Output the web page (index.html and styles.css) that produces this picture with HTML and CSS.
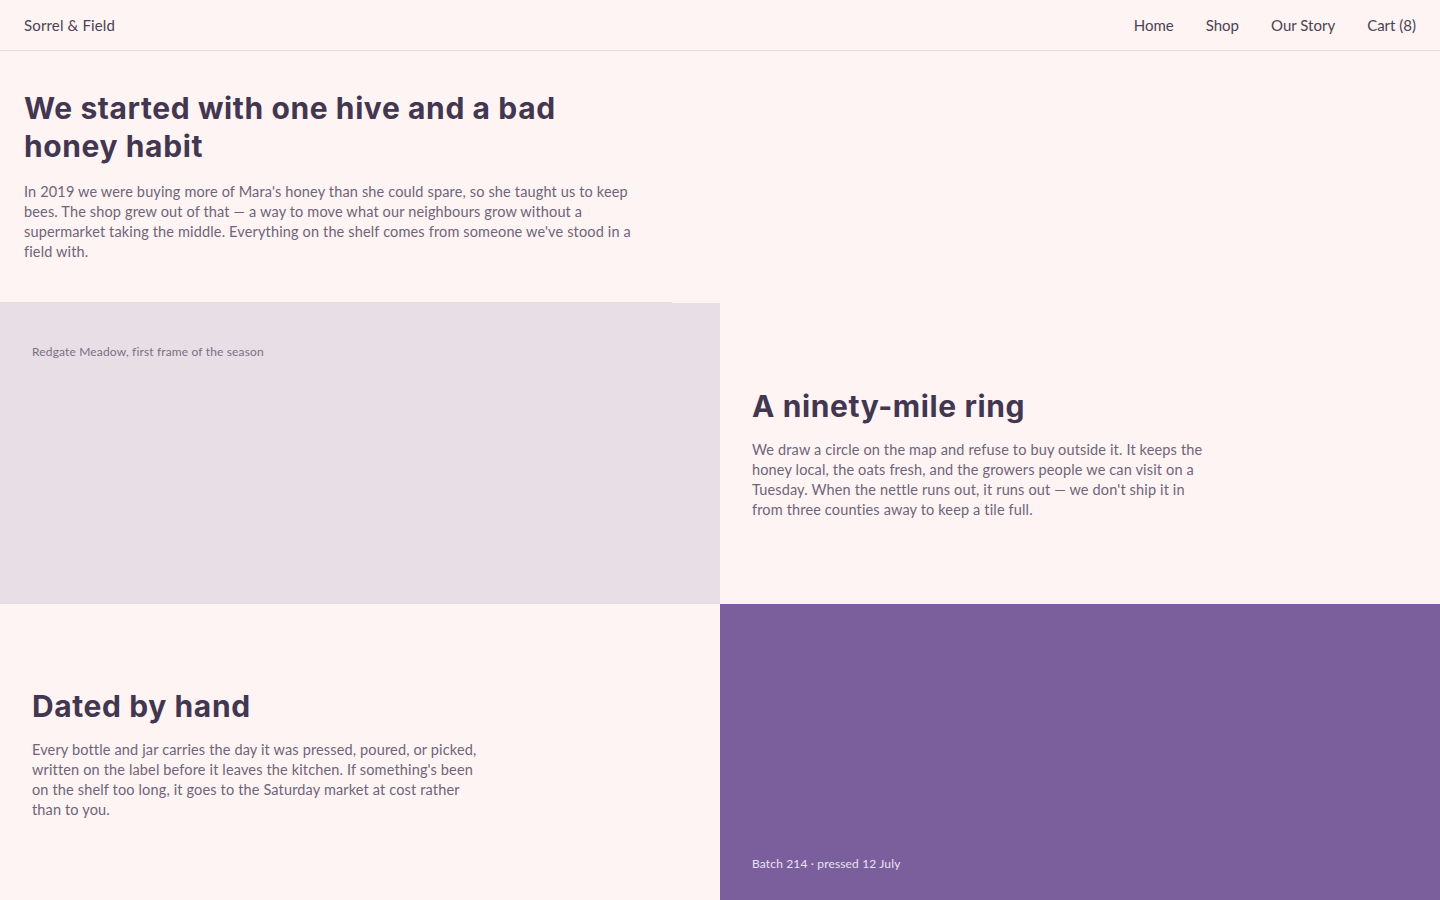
FILE: index.html
```html
<!DOCTYPE html>
<html lang="en">
<head>
    <meta charset="UTF-8">
    <meta name="viewport" content="width=device-width, initial-scale=1.0">
    <title>Our Story · Sorrel &amp; Field</title>
<link rel="stylesheet" href="styles.css">
</head>
<body>
    <header class="site-header">
        <a class="brand" href="#">Sorrel &amp; Field</a>
        <nav class="main-nav">
            <a href="#">Home</a>
            <a href="#">Shop</a>
            <a href="#">Our Story</a>
            <a href="#">Cart (8)</a>
        </nav>
    </header>

    <section class="intro">
        <h1>We started with one hive and a bad honey habit</h1>
        <p>In 2019 we were buying more of Mara's honey than she could spare, so she taught us to keep bees. The shop grew out of that — a way to move what our neighbours grow without a supermarket taking the middle. Everything on the shelf comes from someone we've stood in a field with.</p>
    </section>

    <section class="story-grid">
        <div class="tile tile-photo">
            <span class="caption">Redgate Meadow, first frame of the season</span>
        </div>
        <div class="tile tile-text">
            <h2>A ninety-mile ring</h2>
            <p>We draw a circle on the map and refuse to buy outside it. It keeps the honey local, the oats fresh, and the growers people we can visit on a Tuesday. When the nettle runs out, it runs out — we don't ship it in from three counties away to keep a tile full.</p>
        </div>
        <div class="tile tile-text">
            <h2>Dated by hand</h2>
            <p>Every bottle and jar carries the day it was pressed, poured, or picked, written on the label before it leaves the kitchen. If something's been on the shelf too long, it goes to the Saturday market at cost rather than to you.</p>
        </div>
        <div class="tile tile-batch">
            <span class="caption">Batch 214 · pressed 12 July</span>
        </div>
    </section>
</body>
</html>
```

FILE: styles.css
```css
:root {
    --bg: #fdf4f3;
    --ink: #433650;
    --muted: #6f6479;
    --line: #e6dcdc;
    --lilac: #e8dee6;
    --plum: #7a5f9c;
}

* {
    box-sizing: border-box;
}

body {
    margin: 0;
    background: var(--bg);
    color: var(--muted);
    font-family: Lato, "Open Sans", sans-serif;
    font-size: 14.5px;
    line-height: 20px;
    letter-spacing: 0.15px;
}

a {
    color: inherit;
    text-decoration: none;
}

.site-header {
    height: 51px;
    padding: 0 24px;
    display: flex;
    align-items: center;
    justify-content: space-between;
    border-bottom: 1px solid var(--line);
    color: #4b4354;
    font-size: 15px;
}

.main-nav {
    display: flex;
    gap: 32px;
    letter-spacing: 0;
}

h1,
h2 {
    margin: 0;
    color: var(--ink);
    font-family: Inter, sans-serif;
    font-weight: 700;
    letter-spacing: 0.02em;
}

.intro {
    max-width: 672px;
    padding: 38px 24px 40px;
    border-bottom: 1px solid var(--line);
}

.intro h1 {
    font-size: 30px;
    line-height: 38px;
    margin-bottom: 17px;
}

.intro p {
    margin: 0;
}

.story-grid {
    display: grid;
    grid-template-columns: 1fr 1fr;
    grid-template-rows: 301px 300px;
}

.tile {
    padding: 32px;
}

.tile-photo {
    background: var(--lilac);
    border-bottom: 1px solid var(--line);
    padding-top: 38px;
}

.tile-text {
    display: flex;
    flex-direction: column;
    justify-content: center;
}

.tile-text h2 {
    font-size: 30px;
    line-height: 36px;
    margin-bottom: 16px;
}

.tile-text p {
    margin: 0;
    max-width: 460px;
}

.tile-batch {
    background: var(--plum);
    display: flex;
    align-items: flex-end;
}

.caption {
    font-size: 12px;
    line-height: 16px;
    color: #7b6f83;
}

.tile-batch .caption {
    color: #ebe2f2;
}
```
